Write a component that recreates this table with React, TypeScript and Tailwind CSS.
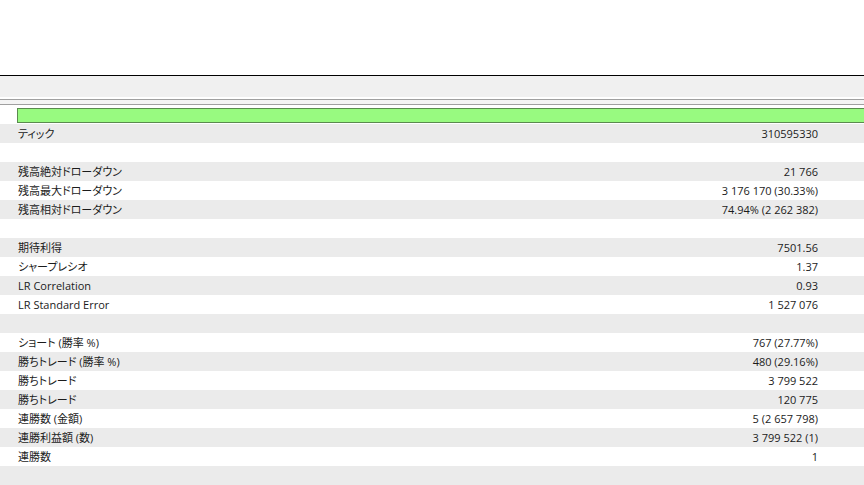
const rows: [string, string][] = [
  ["ティック", "310595330"],
  ["", ""],
  ["残高絶対ドローダウン", "21 766"],
  ["残高最大ドローダウン", "3 176 170 (30.33%)"],
  ["残高相対ドローダウン", "74.94% (2 262 382)"],
  ["", ""],
  ["期待利得", "7501.56"],
  ["シャープレシオ", "1.37"],
  ["LR Correlation", "0.93"],
  ["LR Standard Error", "1 527 076"],
  ["", ""],
  ["ショート (勝率 %)", "767 (27.77%)"],
  ["勝ちトレード (勝率 %)", "480 (29.16%)"],
  ["勝ちトレード", "3 799 522"],
  ["勝ちトレード", "120 775"],
  ["連勝数 (金額)", "5 (2 657 798)"],
  ["連勝利益額 (数)", "3 799 522 (1)"],
  ["連勝数", "1"],
  ["", ""],
];

export default function App() {
  return (
    <div
      className="h-[485px] w-[864px] overflow-hidden bg-white text-[11px] text-[#1b1b1b] [font-feature-settings:'palt']"
      style={{ fontFamily: '"Open Sans", "Noto Sans CJK JP", sans-serif' }}
    >
      <div className="h-[75px]" />
      <div className="h-px bg-black" />
      <div className="h-[21px] bg-[#f0f0f0]" />
      <div className="h-[2px] bg-white" />
      <div className="h-px bg-[#a0a0a0]" />
      <div className="h-[4px] bg-[#f4f4f4]" />
      <div className="h-px bg-[#a0a0a0]" />
      <div className="h-[3px]" />
      <div className="h-[15px] pl-[17px]">
        <div className="h-full w-full border border-r-0 border-[#5b8a4f] bg-[#98fa80]" />
      </div>
      <div className="h-px" />
      {rows.map(([label, value], i) => (
        <div
          key={i}
          className={`flex h-[19px] items-center justify-between pl-[18px] pr-[46px] leading-none ${
            i % 2 === 0 ? "bg-[#ebebeb]" : "bg-white"
          }`}
        >
          <span>{label}</span>
          <span>{value}</span>
        </div>
      ))}
    </div>
  );
}
